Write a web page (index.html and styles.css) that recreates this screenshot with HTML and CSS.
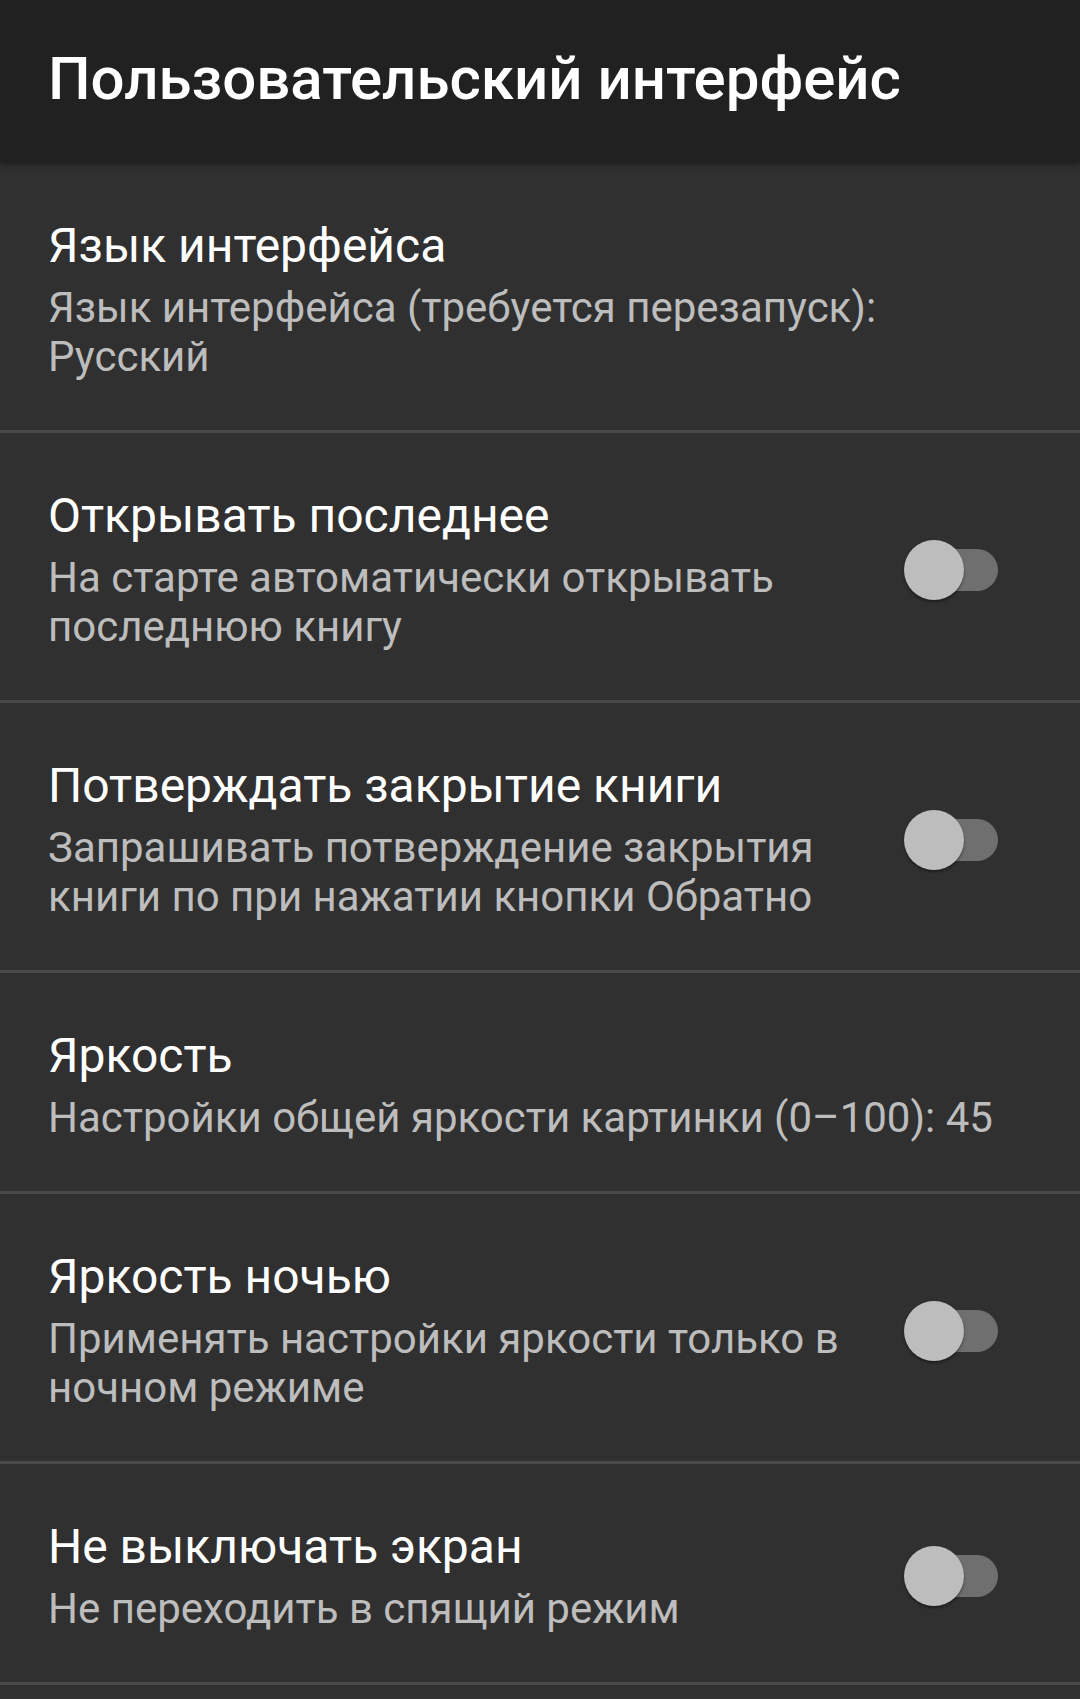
FILE: index.html
```html
<!DOCTYPE html>
<html lang="ru">
<head>
<meta charset="utf-8">
<title>Пользовательский интерфейс</title>
<link rel="stylesheet" href="styles.css">
</head>
<body>
<header class="appbar">
  <h1 class="appbar-title">Пользовательский интерфейс</h1>
</header>
<main class="prefs">
  <div class="pref">
    <div class="pref-text">
      <div class="pref-title">Язык интерфейса</div>
      <div class="pref-summary">Язык интерфейса (требуется перезапуск): Русский</div>
    </div>
  </div>
  <div class="pref pref-switch">
    <div class="pref-text">
      <div class="pref-title">Открывать последнее</div>
      <div class="pref-summary">На старте автоматически открывать последнюю книгу</div>
    </div>
    <div class="switch"><span class="track"></span><span class="thumb"></span></div>
  </div>
  <div class="pref pref-switch">
    <div class="pref-text">
      <div class="pref-title">Потверждать закрытие книги</div>
      <div class="pref-summary">Запрашивать потверждение закрытия книги по при нажатии кнопки Обратно</div>
    </div>
    <div class="switch"><span class="track"></span><span class="thumb"></span></div>
  </div>
  <div class="pref">
    <div class="pref-text">
      <div class="pref-title">Яркость</div>
      <div class="pref-summary">Настройки общей яркости картинки (0–100): 45</div>
    </div>
  </div>
  <div class="pref pref-switch">
    <div class="pref-text">
      <div class="pref-title">Яркость ночью</div>
      <div class="pref-summary">Применять настройки яркости только в ночном режиме</div>
    </div>
    <div class="switch"><span class="track"></span><span class="thumb"></span></div>
  </div>
  <div class="pref pref-switch">
    <div class="pref-text">
      <div class="pref-title">Не выключать экран</div>
      <div class="pref-summary">Не переходить в спящий режим</div>
    </div>
    <div class="switch"><span class="track"></span><span class="thumb"></span></div>
  </div>
</main>
</body>
</html>
```
FILE: styles.css
```css
* { box-sizing: border-box; }
html, body {
  margin: 0;
  padding: 0;
  background: #303030;
  font-family: Roboto, "Noto Sans", "Liberation Sans", sans-serif;
  -webkit-font-smoothing: antialiased;
}
body { min-height: 1699px; }

.appbar {
  position: relative;
  z-index: 1;
  height: 163px;
  background: #212121;
  padding: 0 48px;
  display: flex;
  align-items: flex-start;
  box-shadow: 0 2px 6px rgba(0, 0, 0, 0.35);
}
.appbar-title {
  margin: 0;
  padding-top: 44px;
  font-size: 60px;
  font-weight: 500;
  line-height: 70px;
  color: #ffffff;
  letter-spacing: 0;
}

.prefs {
  display: flex;
  flex-direction: column;
}
.pref {
  display: flex;
  align-items: center;
  padding: 55px 48px 49px 48px;
  border-bottom: 3px solid #4a4a4a;
}
.pref-text {
  flex: 1;
  min-width: 0;
  padding-right: 30px;
}
.pref-switch .pref-text { padding-right: 0; }
.pref-title {
  font-size: 48px;
  line-height: 56px;
  color: #ffffff;
  margin-bottom: 9px;
}
.pref-summary {
  font-size: 42px;
  line-height: 49px;
  color: #bdbdbd;
}

.pref-switch { padding-right: 82px; }
.switch {
  position: relative;
  flex: none;
  width: 102px;
  height: 60px;
  margin-left: 26px;
}
.track {
  position: absolute;
  left: 10px;
  top: 9px;
  width: 92px;
  height: 42px;
  border-radius: 21px;
  background: #6f6f6f;
}
.thumb {
  position: absolute;
  left: 8px;
  top: 0;
  width: 60px;
  height: 60px;
  border-radius: 50%;
  background: #bdbdbd;
  box-shadow: 0 2px 3px rgba(0, 0, 0, 0.4);
}
```
